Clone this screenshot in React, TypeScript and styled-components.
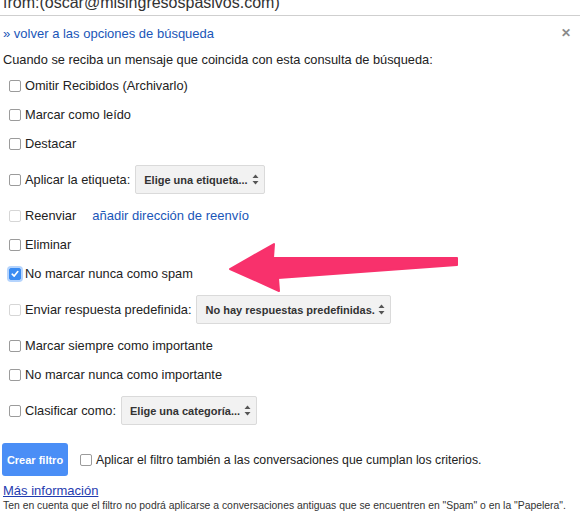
import styled, { createGlobalStyle } from 'styled-components'

const GlobalStyle = createGlobalStyle`
  body {
    margin: 0;
    background: #fff;
    font-family: "Liberation Sans", Arial, sans-serif;
    color: #222;
  }
`

const Page = styled.div`
  position: relative;
  width: 580px;
  height: 518px;
  overflow: hidden;
`

const Header = styled.div`
  height: 15px;
  overflow: hidden;
  border-bottom: 1px solid #cfcfcf;
`

const HeaderText = styled.div`
  margin-top: -5px;
  padding-left: 3px;
  font-size: 16px;
  line-height: 16px;
  color: #333;
  white-space: nowrap;
`

const Body = styled.div`
  padding: 0 3px;
`

const BackRow = styled.div`
  display: flex;
  justify-content: space-between;
  align-items: center;
  height: 16px;
  margin-top: 9px;
  padding-right: 6px;
`

const Link = styled.a`
  font-size: 13px;
  color: #1a56b8;
  text-decoration: none;
  cursor: pointer;
`

const Close = styled.span`
  font-size: 12px;
  font-weight: bold;
  color: #8a8a8a;
`

const Description = styled.div`
  margin-top: 11px;
  height: 16px;
  line-height: 16px;
  font-size: 12.8px;
`

const Options = styled.div`
  display: flex;
  flex-direction: column;
  margin-top: 3px;
`

const Row = styled.label<{ $tall?: boolean }>`
  display: flex;
  align-items: center;
  height: ${(p) => (p.$tall ? 43 : 29)}px;
  font-size: 12.8px;
`

const Box = styled.span<{ $checked?: boolean; $disabled?: boolean }>`
  box-sizing: border-box;
  display: inline-flex;
  align-items: center;
  justify-content: center;
  width: 12px;
  height: 12px;
  margin: 0 4px 0 6px;
  border-radius: 2px;
  border: 1px solid ${(p) => (p.$checked ? '#3b8cf2' : p.$disabled ? '#d6d6d6' : '#9b9b9b')};
  background: ${(p) => (p.$checked ? '#3b8cf2' : '#fff')};
  box-shadow: ${(p) => (p.$checked ? '0 0 0 2px rgba(90, 160, 250, 0.45)' : 'none')};
  flex: none;
`

const Select = styled.span<{ $w: number }>`
  box-sizing: border-box;
  display: inline-flex;
  align-items: center;
  justify-content: space-between;
  width: ${(p) => p.$w}px;
  height: 29px;
  margin-left: 5px;
  padding: 0 5px 0 8px;
  border: 1px solid #dadada;
  border-radius: 2px;
  background: #f2f2f2;
  font-size: 11px;
  font-weight: bold;
  color: #333;
`

const ForwardLink = styled(Link)`
  margin-left: 16px;
`

const Footer = styled.div`
  display: flex;
  align-items: center;
  margin-top: 11px;
  height: 33px;
`

const Button = styled.button`
  width: 66px;
  height: 33px;
  margin-left: -1px;
  padding: 0;
  border: none;
  border-radius: 3px;
  background: #4a8ef6;
  color: #fff;
  font-family: inherit;
  font-size: 11px;
  font-weight: bold;
  white-space: nowrap;
`

const FooterLabel = styled.label`
  display: flex;
  align-items: center;
  margin-left: 6px;
  font-size: 12.3px;
`

const MoreInfo = styled.a`
  display: block;
  margin-top: 7px;
  font-size: 13px;
  line-height: 15px;
  color: #1f3caf;
  text-decoration: underline;
`

const Note = styled.div`
  margin-top: 1px;
  font-size: 10.4px;
  line-height: 14px;
  color: #333;
  white-space: nowrap;
`

const ArrowLayer = styled.svg`
  position: absolute;
  left: 0;
  top: 0;
  pointer-events: none;
`

function Check() {
  return (
    <svg width="8" height="8" viewBox="0 0 8 8">
      <path d="M1.2 4.2 L3.2 6.1 L6.8 1.6" fill="none" stroke="#fff" strokeWidth="1.6" strokeLinecap="round" strokeLinejoin="round" />
    </svg>
  )
}

function Updown() {
  return (
    <svg width="7" height="11" viewBox="0 0 7 11">
      <path d="M3.5 0.5 L6.5 4 L0.5 4 Z" fill="#555" />
      <path d="M3.5 10.5 L6.5 7 L0.5 7 Z" fill="#555" />
    </svg>
  )
}

type Opt = {
  label: string
  select?: { text: string; w: number }
  link?: string
  checked?: boolean
  disabled?: boolean
}

const options: Opt[] = [
  { label: 'Omitir Recibidos (Archivarlo)' },
  { label: 'Marcar como leído' },
  { label: 'Destacar' },
  { label: 'Aplicar la etiqueta:', select: { text: 'Elige una etiqueta...', w: 130 } },
  { label: 'Reenviar', link: 'añadir dirección de reenvío', disabled: true },
  { label: 'Eliminar' },
  { label: 'No marcar nunca como spam', checked: true },
  { label: 'Enviar respuesta predefinida:', select: { text: 'No hay respuestas predefinidas.', w: 195 }, disabled: true },
  { label: 'Marcar siempre como importante' },
  { label: 'No marcar nunca como importante' },
  { label: 'Clasificar como:', select: { text: 'Elige una categoría...', w: 136 } },
]

export default function App() {
  return (
    <Page>
      <GlobalStyle />
      <Header>
        <HeaderText>from:(oscar@misingresospasivos.com)</HeaderText>
      </Header>
      <Body>
        <BackRow>
          <Link>» volver a las opciones de búsqueda</Link>
          <Close>✕</Close>
        </BackRow>
        <Description>Cuando se reciba un mensaje que coincida con esta consulta de búsqueda:</Description>
        <Options>
          {options.map((o) => (
            <Row key={o.label} $tall={!!o.select}>
              <Box $checked={o.checked} $disabled={o.disabled}>
                {o.checked && <Check />}
              </Box>
              {o.label}
              {o.link && <ForwardLink>{o.link}</ForwardLink>}
              {o.select && (
                <Select $w={o.select.w}>
                  {o.select.text}
                  <Updown />
                </Select>
              )}
            </Row>
          ))}
        </Options>
        <Footer>
          <Button>Crear filtro</Button>
          <FooterLabel>
            <Box />
            Aplicar el filtro también a las conversaciones que cumplan los criterios.
          </FooterLabel>
        </Footer>
        <MoreInfo>Más información</MoreInfo>
        <Note>
          Ten en cuenta que el filtro no podrá aplicarse a conversaciones antiguas que se encuentren en "Spam" o en la "Papelera".
        </Note>
      </Body>
      <ArrowLayer width="580" height="518" viewBox="0 0 580 518">
        <path
          d="M230 269 L274 244 L273 258 L457 258 L457 265 L278 278 L279 291 Z"
          fill="#f8316c"
          stroke="#f8316c"
          strokeWidth="2"
          strokeLinejoin="round"
        />
      </ArrowLayer>
    </Page>
  )
}
